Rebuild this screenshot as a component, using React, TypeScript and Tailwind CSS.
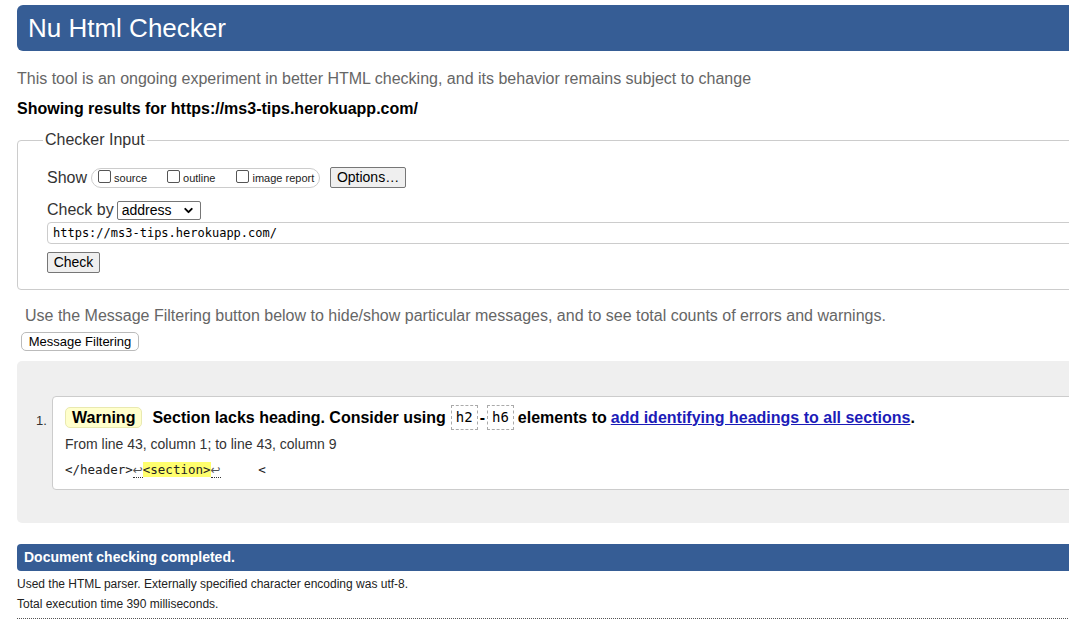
import { ChevronDown } from 'lucide-react';

const sans = { fontFamily: '"Liberation Sans", Arial, sans-serif' };

const Box = ({ label }: { label: string }) => (
  <span className="mx-[2px] inline-flex h-[25px] items-center border border-dashed border-[#aaa] px-[4px] font-['DejaVu_Sans_Mono',monospace] text-[14px] font-normal">
    {label}
  </span>
);

const Check = ({ label, className = '' }: { label: string; className?: string }) => (
  <span className={`flex items-end whitespace-nowrap ${className}`}>
    <span className="mb-[2px] h-[13px] w-[13px] rounded-[2px] border border-[#555] bg-white" />
    <span className="ml-[3px] text-[11px] leading-[13px] text-[#222]">{label}</span>
  </span>
);

const Ret = () => (
  <span className="border-b border-dotted border-[#333] font-['DejaVu_Sans',sans-serif] text-[12px] text-[#555]">↩</span>
);

export default function App() {
  return (
    <div className="h-[622px] w-[1069px] overflow-hidden bg-white text-[#222]" style={sans}>
      <div className="w-[1120px] pl-[17px]">
        <div className="mt-[5px] flex h-[46px] items-center rounded-l-md bg-[#365d95] pl-[11px] text-[26px] text-white">
          Nu Html Checker
        </div>

        <p className="mt-[19px] text-[16px] leading-[18px] text-[#666]">
          This tool is an ongoing experiment in better HTML checking, and its behavior remains subject to change
        </p>
        <p className="mt-[12px] text-[16px] font-bold leading-[18px] text-black">
          Showing results for https://ms3-tips.herokuapp.com/
        </p>

        <fieldset className="mt-[13px] rounded-[4px] border border-[#ccc] pb-[16px] pl-[29px]">
          <legend className="-ml-[4px] px-[2px] text-[16px] leading-[18px] text-[#333]">Checker Input</legend>

          <div className="mt-[18px] flex h-[21px] items-center text-[16px] text-[#333]">
            <span>Show</span>
            <span className="ml-[4px] flex h-[20px] w-[229px] items-center rounded-full border border-[#ccc] pl-[6px]">
              <Check label="source" />
              <Check label="outline" className="ml-[20px]" />
              <Check label="image report" className="ml-[21px]" />
            </span>
            <span className="ml-[10px] flex h-[21px] w-[76px] items-center justify-center rounded-[2px] border border-[#767676] bg-[#efefef] text-[14px] text-black">
              Options…
            </span>
          </div>

          <div className="mt-[12px] flex h-[20px] items-center text-[16px] text-[#333]">
            <span>Check by</span>
            <span className="ml-[3px] flex h-[19px] w-[84px] items-center justify-between rounded-[2px] border border-[#767676] pl-[4px] pr-[5px] text-[14px] text-black">
              address
              <ChevronDown className="h-[13px] w-[13px]" strokeWidth={3.5} />
            </span>
          </div>

          <div className="mt-[2px] flex h-[22px] items-center rounded-[4px] border border-[#ccc] pl-[5px] font-['DejaVu_Sans_Mono',monospace] text-[12px] text-black">
            https://ms3-tips.herokuapp.com/
          </div>

          <div className="mt-[8px] flex h-[21px] w-[53px] items-center justify-center rounded-[2px] border border-[#767676] bg-[#efefef] text-[14px] text-black">
            Check
          </div>
        </fieldset>

        <p className="ml-[8px] mt-[17px] text-[16px] leading-[18px] text-[#666]">
          Use the Message Filtering button below to hide/show particular messages, and to see total counts of errors and warnings.
        </p>
        <div className="ml-[4px] mt-[7px] flex h-[19px] w-[118px] items-center justify-center rounded-[5px] border border-[#bbb] bg-white text-[13px] text-black">
          Message Filtering
        </div>

        <div className="mt-[10px] flex rounded-l-[5px] bg-[#efefef] pb-[33px] pl-[19px] pt-[35px]">
          <span className="w-[16px] pt-[15px] text-[13px] text-[#333]">1.</span>
          <div className="flex-1 rounded-l-[4px] border border-[#ccc] bg-white pb-[11px] pl-[12px] pt-[8px]">
            <div className="flex h-[25px] items-center text-[16px] font-bold text-black">
              <span className="flex h-[21px] items-center rounded-[5px] border border-[#e9e9b0] bg-[#ffffcc] px-[6px]">Warning</span>
              <span className="ml-[10px]">Section lacks heading. Consider using</span>
              <span className="ml-[3px] flex items-center">
                <Box label="h2" />-<Box label="h6" />
              </span>
              <span className="ml-[2px]">elements to</span>
              <a href="#" className="ml-[4px] text-[#1c1cb8] underline">add identifying headings to all sections</a>
              <span>.</span>
            </div>
            <p className="mt-[5px] text-[14px] leading-[18px] text-[#333]">From line 43, column 1; to line 43, column 9</p>
            <p className="mt-[9px] whitespace-pre font-['DejaVu_Sans_Mono',monospace] text-[12.5px] leading-[16px] text-[#222]">
              {'</header>'}
              <Ret />
              <span className="bg-[#ffff6e]">{'<section>'}</span>
              <Ret />
              {'     <'}
            </p>
          </div>
        </div>

        <div className="mt-[21px] flex h-[27px] items-center rounded-l-[4px] bg-[#365d95] pl-[7px] text-[14px] font-bold text-white">
          Document checking completed.
        </div>
        <p className="mt-[6px] text-[12px] leading-[14px] text-[#222]">
          Used the HTML parser. Externally specified character encoding was utf-8.
        </p>
        <p className="mt-[6px] text-[12px] leading-[14px] text-[#222]">Total execution time 390 milliseconds.</p>
        <div className="mt-[7px] border-t border-dotted border-[#555]" />
      </div>
    </div>
  );
}
